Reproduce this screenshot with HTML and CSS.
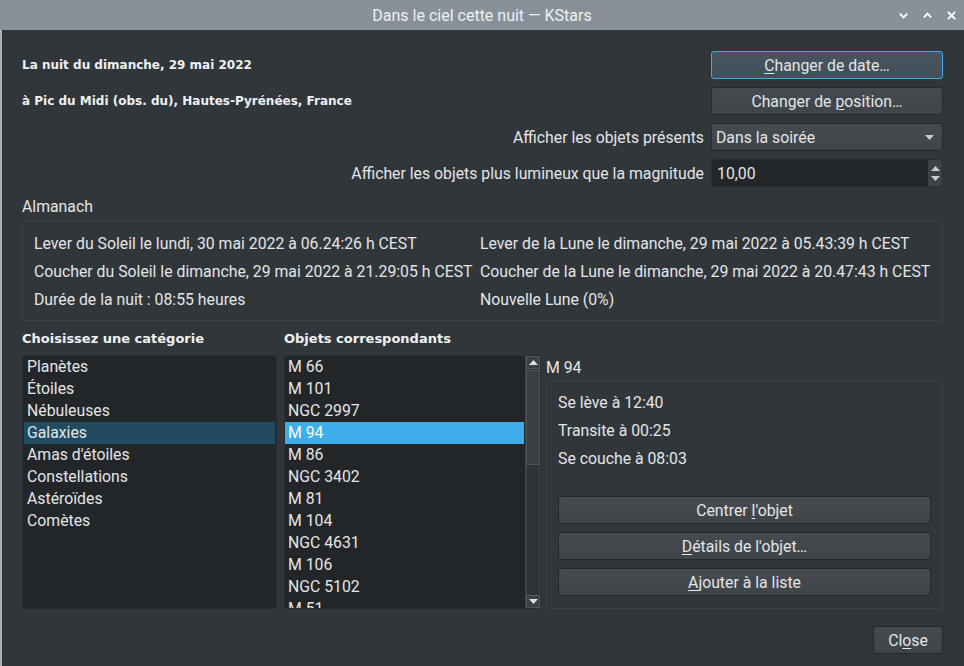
FILE: index.html
```html
<!DOCTYPE html>
<html lang="fr">
<head>
<meta charset="utf-8">
<title>Dans le ciel cette nuit — KStars</title>
<link rel="stylesheet" href="styles.css">
</head>
<body>
<div class="window">
  <header class="titlebar">
    <span class="title">Dans le ciel cette nuit — KStars</span>
    <div class="wm-buttons">
      <svg class="wm" width="12" height="12" viewBox="0 0 12 12"><path d="M2 4 L6 8 L10 4" fill="none" stroke="#fff" stroke-width="2"/></svg>
      <svg class="wm" width="12" height="12" viewBox="0 0 12 12"><path d="M2 8 L6 4 L10 8" fill="none" stroke="#fff" stroke-width="2"/></svg>
      <svg class="wm" width="12" height="12" viewBox="0 0 12 12"><path d="M2 2 L10 10 M10 2 L2 10" fill="none" stroke="#fff" stroke-width="2"/></svg>
    </div>
  </header>
  <main class="content">
    <section class="top-grid">
      <div class="bold-label">La nuit du dimanche, 29 mai 2022</div>
      <button class="btn focused"><u>C</u>hanger de date…</button>
      <div class="bold-label">à Pic du Midi (obs. du), Hautes-Pyrénées, France</div>
      <button class="btn">Changer de <u>p</u>osition…</button>
      <div class="field-label">Afficher les objets présents</div>
      <div class="combo"><span>Dans la soirée</span><svg width="9" height="5" viewBox="0 0 9 5"><path d="M0 0 H9 L4.5 5 Z" fill="#c8cacc"/></svg></div>
      <div class="field-label">Afficher les objets plus lumineux que la magnitude</div>
      <div class="spin"><span>10,00</span>
        <div class="spin-btns">
          <svg width="9" height="5" viewBox="0 0 9 5"><path d="M0 5 H9 L4.5 0 Z" fill="#c8cacc"/></svg>
          <svg width="9" height="5" viewBox="0 0 9 5"><path d="M0 0 H9 L4.5 5 Z" fill="#c8cacc"/></svg>
        </div>
      </div>
    </section>

    <div class="section-label">Almanach</div>
    <section class="almanac">
      <div>Lever du Soleil le lundi, 30 mai 2022 à 06.24:26 h CEST</div>
      <div>Lever de la Lune le dimanche, 29 mai 2022 à 05.43:39 h CEST</div>
      <div>Coucher du Soleil le dimanche, 29 mai 2022 à 21.29:05 h CEST</div>
      <div>Coucher de la Lune le dimanche, 29 mai 2022 à 20.47:43 h CEST</div>
      <div>Durée de la nuit : 08:55 heures</div>
      <div>Nouvelle Lune (0%)</div>
    </section>

    <section class="bottom-grid">
      <div class="bold-label head">Choisissez une catégorie</div>
      <div class="bold-label head">Objets correspondants</div>
      <div></div>
      <ul class="list">
        <li>Planètes</li>
        <li>Étoiles</li>
        <li>Nébuleuses</li>
        <li class="sel-inactive">Galaxies</li>
        <li>Amas d'étoiles</li>
        <li>Constellations</li>
        <li>Astéroïdes</li>
        <li>Comètes</li>
      </ul>
      <div class="objlist">
        <ul class="list inner">
          <li>M 66</li>
          <li>M 101</li>
          <li>NGC 2997</li>
          <li class="sel">M 94</li>
          <li>M 86</li>
          <li>NGC 3402</li>
          <li>M 81</li>
          <li>M 104</li>
          <li>NGC 4631</li>
          <li>M 106</li>
          <li>NGC 5102</li>
          <li>M 51</li>
        </ul>
        <div class="scrollbar">
          <div class="sb-btn"><svg width="9" height="5" viewBox="0 0 9 5"><path d="M0 5 H9 L4.5 0 Z" fill="#dfe1e3"/></svg></div>
          <div class="sb-track"><div class="sb-thumb"></div></div>
          <div class="sb-btn"><svg width="9" height="5" viewBox="0 0 9 5"><path d="M0 0 H9 L4.5 5 Z" fill="#dfe1e3"/></svg></div>
        </div>
      </div>
      <div class="details">
        <div class="obj-name">M 94</div>
        <div class="details-frame">
          <div class="line">Se lève à 12:40</div>
          <div class="line">Transite à 00:25</div>
          <div class="line">Se couche à 08:03</div>
          <div class="detail-btns">
            <button class="btn">Centrer <u>l</u>'objet</button>
            <button class="btn"><u>D</u>étails de l'objet…</button>
            <button class="btn"><u>A</u>jouter à la liste</button>
          </div>
        </div>
      </div>
    </section>

    <footer class="footer">
      <button class="btn close">Cl<u>o</u>se</button>
    </footer>
  </main>
</div>
</body>
</html>
```

FILE: styles.css
```css
* { box-sizing: border-box; }
html, body { margin: 0; padding: 0; }
body {
  width: 964px;
  height: 666px;
  overflow: hidden;
  background: #31363b;
  font-family: Roboto, "Liberation Sans", sans-serif;
  font-size: 15.8px;
  color: #e3e5e7;
}
.window { display: flex; flex-direction: column; height: 666px; }
.titlebar {
  height: 30px;
  flex: none;
  background: #889099;
  display: flex;
  align-items: center;
  justify-content: center;
  position: relative;
}
.title { color: #eef0f2; font-size: 16px; }
.wm-buttons {
  position: absolute;
  right: 7px;
  top: 10px;
  display: flex;
  gap: 13px;
}
.wm { display: block; width: 11px; height: 11px; }

.content {
  flex: 1;
  border-left: 2px solid #aeb3b8;
  padding: 21px 21px 0 20px;
  display: flex;
  flex-direction: column;
}

.top-grid {
  display: grid;
  grid-template-columns: 1fr 232px;
  grid-auto-rows: 28px;
  column-gap: 7px;
  row-gap: 8px;
  align-items: center;
}
.bold-label {
  font-family: "DejaVu Sans", sans-serif;
  font-weight: bold;
  font-size: 12px;
  color: #eff0f1;
}
.field-label { text-align: right; }

.btn {
  font-family: Roboto, "Liberation Sans", sans-serif;
  font-size: 15.8px;
  color: #e3e5e7;
  height: 28px;
  background: linear-gradient(#464b51, #3f4449);
  border: 1px solid #25292d;
  border-radius: 3px;
  padding: 0 8px;
  text-align: center;
  width: 100%;
}
.btn u { text-decoration-thickness: 1px; text-underline-offset: 2px; }
.btn.focused {
  background: linear-gradient(#48545f, #424e58);
  border-color: #3daee9;
}
.combo {
  height: 28px;
  background: linear-gradient(#464b51, #3f4449);
  border: 1px solid #25292d;
  border-radius: 3px;
  display: flex;
  align-items: center;
  justify-content: space-between;
  padding: 0 8px 0 4px;
}
.spin {
  height: 28px;
  background: #232629;
  border: 1px solid #2a2e32;
  border-radius: 3px;
  display: flex;
  align-items: center;
  justify-content: space-between;
  padding-left: 5px;
}
.spin-btns {
  width: 14px;
  height: 26px;
  background: #3d4247;
  display: flex;
  flex-direction: column;
  align-items: center;
  justify-content: center;
  gap: 5px;
  border-radius: 0 2px 2px 0;
}
.spin-btns svg { display: block; }

.section-label { margin-top: 10px; height: 20px; line-height: 20px; }
.almanac {
  margin-top: 4px;
  height: 100px;
  border: 1px solid #3b4045;
  border-radius: 2px;
  background: #31363b;
  padding: 7px 0 0 11px;
  display: grid;
  grid-template-columns: 446px 1fr;
  grid-auto-rows: 28px;
  align-items: center;
  white-space: nowrap;
}

.bottom-grid {
  display: grid;
  grid-template-columns: 255px 256px 1fr;
  grid-template-rows: 34px 254px;
  column-gap: 7px;
}
.head { align-self: center; padding-top: 1px; font-size: 13px; }
.objlist { margin-right: -1px; }
.details { margin-left: -1px; }

.list {
  list-style: none;
  margin: 0;
  padding: 0 1px;
  background: #232629;
  border: 1px solid #2a2e32;
  overflow: hidden;
  height: 254px;
}
.list li {
  height: 22px;
  line-height: 22px;
  padding-left: 3px;
  white-space: nowrap;
}
.list li.sel-inactive { background: #204b60; }
.list li.sel { background: #3daee9; color: #fcfcfc; }

.objlist {
  display: flex;
  height: 254px;
  background: #232629;
  border: 1px solid #2a2e32;
}
.list.inner { flex: 1; border: 0; height: 252px; padding: 0 1px 0 0; }
.list.inner li { padding-left: 3px; }
.scrollbar {
  width: 15px;
  flex: none;
  display: flex;
  flex-direction: column;
  background: #31363b;
  border-left: 1px solid #3e4449;
}
.sb-btn {
  height: 13px;
  flex: none;
  background: #3b4045;
  border: 1px solid #51575d;
  display: flex;
  align-items: center;
  justify-content: center;
}
.sb-btn svg { display: block; }
.sb-track { flex: 1; padding: 1px 0; background: #2e3338; border-left: 1px solid #3e4449; border-right: 1px solid #3e4449; }
.sb-thumb {
  height: 95px;
  background: #3a3f44;
  border: 1px solid #4d5359;
  margin: 0 -1px;
}

.details { display: flex; flex-direction: column; }
.obj-name { height: 26px; line-height: 26px; padding-left: 0; }
.details-frame {
  flex: 1;
  border: 1px solid #3b4045;
  border-radius: 2px;
  padding: 7px 11px 12px 11px;
  display: flex;
  flex-direction: column;
}
.line { height: 28px; line-height: 28px; }
.detail-btns {
  margin-top: auto;
  display: flex;
  flex-direction: column;
  gap: 8px;
}

.footer {
  display: flex;
  justify-content: flex-end;
  margin-top: 17px;
}
.btn.close { width: 70px; }
```
